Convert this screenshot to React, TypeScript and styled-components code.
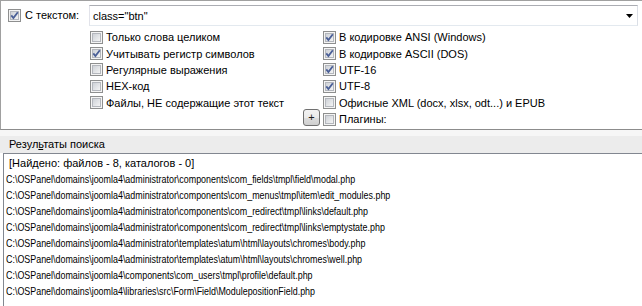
import * as React from 'react';
import styled, { createGlobalStyle } from 'styled-components';

const GlobalStyle = createGlobalStyle`
  html, body {
    margin: 0;
    padding: 0;
    background: #ffffff;
    overflow: hidden;
  }
  body {
    font-family: "Liberation Sans", Arial, sans-serif;
    font-size: 11px;
    color: #000000;
  }
`;

// Layout
const Window = styled.div`
  width: 642px;
  height: 306px;
  display: flex;
  flex-direction: column;
  overflow: hidden;
  background: #ffffff;
`;

const SearchPanel = styled.section`
  display: flex;
  flex-direction: column;
  border-top: 1px solid #a0a0a0;
  border-left: 1px solid #a0a0a0;
  border-bottom: 1px solid #8c8c8c;
  padding: 4px 4px 2px 7px;
`;

const TextRow = styled.div`
  display: grid;
  grid-template-columns: 81px 1fr;
  align-items: center;
  height: 21px;
`;

const ComboBox = styled.div`
  display: flex;
  align-items: center;
  justify-content: space-between;
  height: 21px;
  box-sizing: border-box;
  padding: 0 4px 0 3px;
  border: 1px solid;
  border-color: #abadb3 #dbdfe6 #e3e9ef #e2e3ea;
  background: #ffffff;
`;

const Options = styled.div`
  display: grid;
  grid-template-columns: 213px 20px 1fr;
  margin: 3px 0 0 82px;
`;

const Column = styled.div`
  display: flex;
  flex-direction: column;
`;

const ButtonSlot = styled.div`
  display: flex;
  flex-direction: column;
  justify-content: flex-end;
  padding-bottom: 1px;
`;

const Option = styled.label<{ $gap?: number }>`
  display: flex;
  align-items: center;
  gap: ${(p) => p.$gap ?? 3}px;
  height: 16.4px;
  white-space: nowrap;
  cursor: default;
`;

const PlusButton = styled.button`
  width: 17px;
  height: 17px;
  padding: 0;
  box-sizing: border-box;
  border: 1px solid #707070;
  border-radius: 3px;
  background: linear-gradient(#f2f2f2 0%, #ebebeb 50%, #dddddd 51%, #cfcfcf 100%);
  font-family: "Liberation Sans", Arial, sans-serif;
  font-size: 11px;
  line-height: 13px;
  color: #1e1e1e;
`;

const Splitter = styled.div`
  height: 6px;
  background: #f6f6f6;
`;

const ResultsHeader = styled.div`
  height: 17px;
  line-height: 17px;
  padding-left: 9px;
  background: #ececec;
`;

const ResultsList = styled.div`
  flex: 1;
  margin-left: 3px;
  border-top: 1px solid #828790;
  border-left: 1px solid #828790;
  padding: 1px 0 0 2px;
  background: #ffffff;
`;

// the original list font has a much narrower latin lowercase than Arial
const ResultLine = styled.div<{ $path?: boolean }>`
  height: 16px;
  line-height: 16px;
  white-space: pre;
  transform-origin: left center;
  transform: ${(p) => (p.$path ? 'scaleX(0.81)' : 'none')};
`;

const CheckBox = ({ checked }: { checked?: boolean }) => (
  <svg width="13" height="13" viewBox="0 0 13 13" style={{ flex: 'none' }}>
    <defs>
      <linearGradient id="cbInner" x1="0" y1="0" x2="1" y2="1">
        <stop offset="0" stopColor="#cbcfd5" />
        <stop offset="1" stopColor="#f6f6f6" />
      </linearGradient>
    </defs>
    <rect x="0.5" y="0.5" width="12" height="12" fill="#f4f4f4" stroke="#8e8f8f" />
    <rect x="2.5" y="2.5" width="8" height="8" fill="url(#cbInner)" stroke="#b4b7bd" />
    {checked && (
      <path d="M3.3 6.4 L5.4 9 L9.8 3.2" fill="none" stroke="#4a5f97" strokeWidth="1.8" />
    )}
  </svg>
);

const DropArrow = () => (
  <svg width="7" height="4" viewBox="0 0 7 4">
    <path d="M0 0 H7 L3.5 4 Z" fill="#000000" />
  </svg>
);

const leftOptions = [
  { label: 'Только слова целиком', checked: false },
  { label: 'Учитывать регистр символов', checked: true },
  { label: 'Регулярные выражения', checked: false },
  { label: 'HEX-код', checked: false },
  { label: 'Файлы, НЕ содержащие этот текст', checked: false }
];

const rightOptions = [
  { label: 'В кодировке ANSI (Windows)', checked: true },
  { label: 'В кодировке ASCII (DOS)', checked: true },
  { label: 'UTF-16', checked: true },
  { label: 'UTF-8', checked: true },
  { label: 'Офисные XML (docx, xlsx, odt...) и EPUB', checked: false },
  { label: 'Плагины:', checked: false }
];

const summary = ' [Найдено: файлов - 8, каталогов - 0]';

const results = [
  'C:\\OSPanel\\domains\\joomla4\\administrator\\components\\com_fields\\tmpl\\field\\modal.php',
  'C:\\OSPanel\\domains\\joomla4\\administrator\\components\\com_menus\\tmpl\\item\\edit_modules.php',
  'C:\\OSPanel\\domains\\joomla4\\administrator\\components\\com_redirect\\tmpl\\links\\default.php',
  'C:\\OSPanel\\domains\\joomla4\\administrator\\components\\com_redirect\\tmpl\\links\\emptystate.php',
  'C:\\OSPanel\\domains\\joomla4\\administrator\\templates\\atum\\html\\layouts\\chromes\\body.php',
  'C:\\OSPanel\\domains\\joomla4\\administrator\\templates\\atum\\html\\layouts\\chromes\\well.php',
  'C:\\OSPanel\\domains\\joomla4\\components\\com_users\\tmpl\\profile\\default.php',
  'C:\\OSPanel\\domains\\joomla4\\libraries\\src\\Form\\Field\\ModulepositionField.php'
];

export default function App() {
  return (
    <Window>
      <GlobalStyle />
      <SearchPanel>
        <TextRow>
          <Option $gap={4}>
            <CheckBox checked />
            С текстом:
          </Option>
          <ComboBox>
            <span>class="btn"</span>
            <DropArrow />
          </ComboBox>
        </TextRow>

        <Options>
          <Column>
            {leftOptions.map((o) => (
              <Option key={o.label}>
                <CheckBox checked={o.checked} />
                {o.label}
              </Option>
            ))}
          </Column>
          <ButtonSlot>
            <PlusButton type="button">+</PlusButton>
          </ButtonSlot>
          <Column>
            {rightOptions.map((o) => (
              <Option key={o.label}>
                <CheckBox checked={o.checked} />
                {o.label}
              </Option>
            ))}
          </Column>
        </Options>
      </SearchPanel>

      <Splitter />
      <ResultsHeader>
        Резул<u>ь</u>таты поиска
      </ResultsHeader>
      <ResultsList>
        <ResultLine>{summary}</ResultLine>
        {results.map((r) => (
          <ResultLine key={r} $path>
            {r}
          </ResultLine>
        ))}
      </ResultsList>
    </Window>
  );
}
